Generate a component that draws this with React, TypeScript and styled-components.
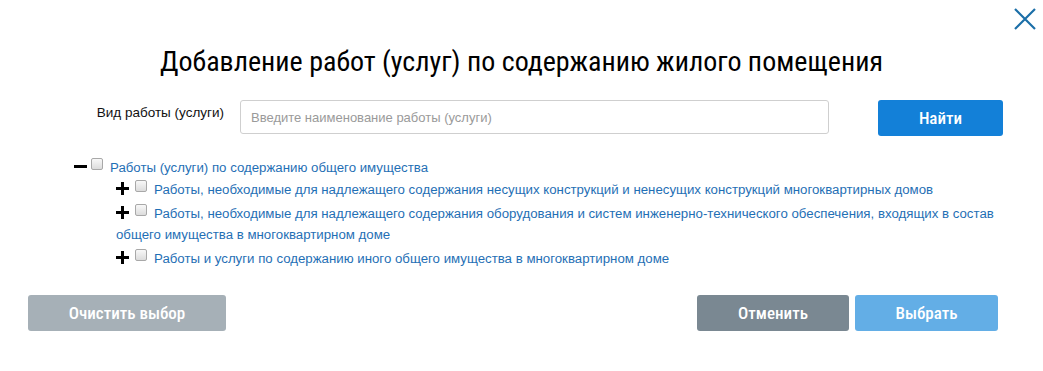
import React from "react";
import styled, { createGlobalStyle } from "styled-components";

const Global = createGlobalStyle`
  html, body { margin: 0; padding: 0; background: #fff; }
  body { font-family: "Liberation Sans", Arial, sans-serif; }
`;

const Modal = styled.div`
  position: relative;
  width: 1043px;
  height: 371px;
  box-sizing: border-box;
  padding: 44px 40px 0 28px;
  background: #fff;
`;

const Close = styled.button`
  position: absolute;
  top: 7px;
  right: 6px;
  width: 24px;
  height: 24px;
  padding: 0;
  border: 0;
  background: none;
  cursor: pointer;
`;

const Title = styled.h1`
  margin: 0;
  text-align: center;
  font-family: "Roboto Condensed", "Liberation Sans Narrow", Roboto, sans-serif;
  font-weight: 400;
  font-size: 28px;
  line-height: 36px;
  letter-spacing: 0;
  color: #000;
  padding-left: 12px;
`;

const SearchRow = styled.div`
  display: grid;
  grid-template-columns: 196px 589px 125px;
  column-gap: 16px;
  margin-top: 20px;
  align-items: start;
  & > :nth-child(3) { margin-left: 33px; }
`;

const Label = styled.label`
  text-align: right;
  font-size: 13.5px;
  line-height: 16px;
  padding-top: 5px;
  color: #111;
`;

const Input = styled.input`
  box-sizing: border-box;
  width: 589px;
  height: 34px;
  border: 1px solid #cfcfcf;
  border-radius: 3px;
  padding: 0 10px;
  font-family: "Liberation Sans", Arial, sans-serif;
  font-size: 13px;
  outline: none;
  &::placeholder { color: #9a9a9a; }
`;

const Btn = styled.button<{ $bg: string; $w: number }>`
  box-sizing: border-box;
  width: ${(p) => p.$w}px;
  height: 36px;
  border: 0;
  border-radius: 3px;
  background: ${(p) => p.$bg};
  color: #fff;
  font-family: "Roboto Condensed", "Liberation Sans Narrow", Roboto, sans-serif;
  font-weight: 500;
  font-size: 17px;
  letter-spacing: 0;
  cursor: pointer;
  padding: 0;
`;

const Tree = styled.div`
  margin: 21px 0 0 46px;
  font-size: 13.25px;
  line-height: 21px;
  color: #1f6fb5;
`;

const Children = styled.div`
  margin: 1px 0 0 42px;
  width: 900px;
`;

const Node = styled.div`
  margin-top: 3px;
  &:first-child { margin-top: 0; }
`;

const Toggle = styled.svg<{ $gap: number }>`
  display: inline-block;
  vertical-align: -1px;
  margin-right: ${(p) => p.$gap}px;
`;

const Check = styled.span`
  display: inline-block;
  box-sizing: border-box;
  width: 12px;
  height: 12px;
  border: 1px solid #a8a8a8;
  border-radius: 2px;
  background: linear-gradient(#f8f8f8, #dcdcdc);
  vertical-align: -1px;
  margin-right: 7px;
  position: relative;
  top: -3px;
`;

const Footer = styled.div`
  display: flex;
  align-items: center;
  gap: 6px;
  margin-top: 26px;
  padding-right: 5px;
  & > :first-child { margin-right: auto; }
`;

const Plus = () => (
  <Toggle $gap={6} width="13" height="13" viewBox="0 0 13 13">
    <rect x="0" y="5" width="13" height="3" fill="#000" />
    <rect x="5" y="0" width="3" height="13" fill="#000" />
  </Toggle>
);

const Minus = () => (
  <Toggle $gap={4} width="13" height="13" viewBox="0 0 13 13">
    <rect x="0" y="5" width="13" height="3" fill="#000" />
  </Toggle>
);

const children = [
  "Работы, необходимые для надлежащего содержания несущих конструкций и ненесущих конструкций многоквартирных домов",
  "Работы, необходимые для надлежащего содержания оборудования и систем инженерно-технического обеспечения, входящих в состав общего имущества в многоквартирном доме",
  "Работы и услуги по содержанию иного общего имущества в многоквартирном доме",
];

export default function App() {
  return (
    <>
      <Global />
      <Modal>
        <Close aria-label="close">
          <svg width="24" height="24" viewBox="0 0 24 24">
            <path d="M2 2 L22 22 M22 2 L2 22" stroke="#1b6fa8" strokeWidth="2.2" fill="none" />
          </svg>
        </Close>
        <Title>Добавление работ (услуг) по содержанию жилого помещения</Title>
        <SearchRow>
          <Label>Вид работы (услуги)</Label>
          <Input placeholder="Введите наименование работы (услуги)" />
          <Btn $bg="#1380d8" $w={125}>Найти</Btn>
        </SearchRow>
        <Tree>
          <Node>
            <Minus />
            <Check />
            Работы (услуги) по содержанию общего имущества
          </Node>
          <Children>
            {children.map((t) => (
              <Node key={t}>
                <Plus />
                <Check />
                {t}
              </Node>
            ))}
          </Children>
        </Tree>
        <Footer>
          <Btn $bg="#a6b0b7" $w={198}>Очистить выбор</Btn>
          <Btn $bg="#7a8892" $w={152}>Отменить</Btn>
          <Btn $bg="#63aee6" $w={143}>Выбрать</Btn>
        </Footer>
      </Modal>
    </>
  );
}
